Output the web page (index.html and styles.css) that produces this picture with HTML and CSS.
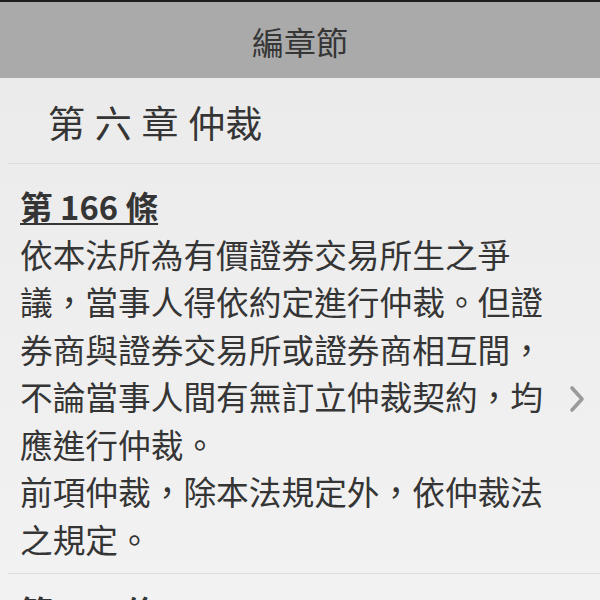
FILE: index.html
```html
<!DOCTYPE html>
<html lang="zh-Hant">
<head>
<meta charset="utf-8">
<title>編章節</title>
<link rel="stylesheet" href="styles.css">
</head>
<body>
<div class="topbar"></div>
<header class="header">編章節</header>
<main class="list">
  <div class="chapter">第 六 章 仲裁</div>
  <div class="article">
    <div class="article-text">
      <div class="article-title">第 166 條</div>
      <p class="para">依本法所為有價證券交易所生之爭議，當事人得依約定進行仲裁。但證券商與證券交易所或證券商相互間，不論當事人間有無訂立仲裁契約，均應進行仲裁。</p>
      <p class="para">前項仲裁，除本法規定外，依仲裁法之規定。</p>
    </div>
    <div class="chevron-col">
      <svg class="chevron" width="16" height="28" viewBox="0 0 16 28"><polyline points="3,3 13,14 3,25" fill="none" stroke="#9a9a9a" stroke-width="3.6" stroke-linecap="round" stroke-linejoin="round"/></svg>
    </div>
  </div>
  <div class="article article-next">
    <div class="article-text">
      <div class="article-title">第 167 條</div>
    </div>
  </div>
</main>
</body>
</html>
```

FILE: styles.css
```css
html, body {
  margin: 0;
  padding: 0;
}
body {
  width: 600px;
  height: 600px;
  overflow: hidden;
  background: linear-gradient(#eaeaea, #f2f2f2);
  font-family: "Noto Sans CJK TC", "Noto Sans", sans-serif;
  color: #353535;
}
.topbar {
  height: 2px;
  background: #1e1e1e;
}
.header {
  height: 76px;
  box-sizing: border-box;
  padding-top: 2px;
  background: #aaaaaa;
  display: flex;
  align-items: center;
  justify-content: center;
  font-size: 32px;
  color: #363636;
}
.list {
  display: flex;
  flex-direction: column;
}
.chapter {
  height: 86px;
  box-sizing: border-box;
  padding-top: 2px;
  display: flex;
  align-items: center;
  font-size: 37px;
  word-spacing: 1.5px;
  color: #353535;
  border-bottom: 1px solid #dedede;
  margin-left: 8px;
  padding-left: 40px;
}
.article {
  display: flex;
  flex-direction: row;
  margin-left: 8px;
  padding: 18px 0 11px 12px;
  border-bottom: 1px solid #dedede;
}
.article-next {
  padding-top: 13px;
  border-bottom: none;
}
.article-text {
  width: 530px;
  font-size: 32.7px;
  line-height: 47.5px;
}
.article-title {
  font-weight: bold;
  text-decoration: underline;
  text-decoration-thickness: 2px;
  text-underline-offset: 3px;
}
.para {
  margin: 0;
}
.chevron-col {
  flex: 1;
  display: flex;
  justify-content: center;
  padding-top: 203px;
  padding-left: 4px;
}
.chevron {
  display: block;
}
```
